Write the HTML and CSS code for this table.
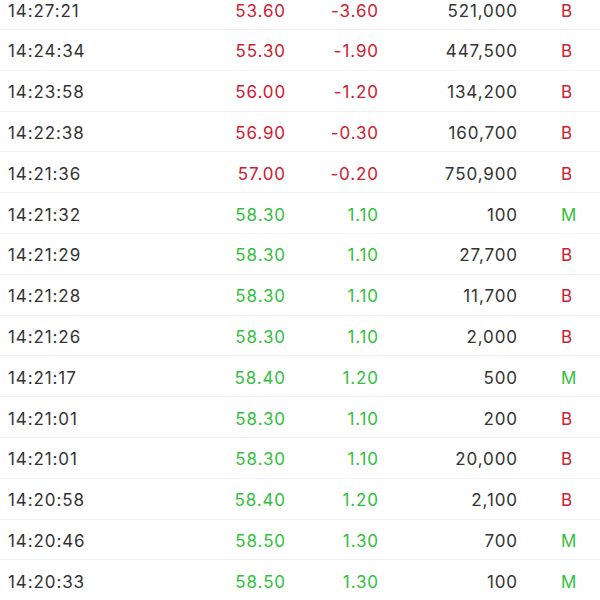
FILE: index.html
```html
<!DOCTYPE html>
<html>
<head>
<meta charset="utf-8">
<link rel="stylesheet" href="styles.css">
</head>
<body>
<div class="list">
  <div class="row"><span class="time">14:27:21</span><span class="num down">53.60</span><span class="num down">-3.60</span><span class="num vol">521,000</span><span class="side b">B</span></div>
  <div class="row"><span class="time">14:24:34</span><span class="num down">55.30</span><span class="num down">-1.90</span><span class="num vol">447,500</span><span class="side b">B</span></div>
  <div class="row"><span class="time">14:23:58</span><span class="num down">56.00</span><span class="num down">-1.20</span><span class="num vol">134,200</span><span class="side b">B</span></div>
  <div class="row"><span class="time">14:22:38</span><span class="num down">56.90</span><span class="num down">-0.30</span><span class="num vol">160,700</span><span class="side b">B</span></div>
  <div class="row"><span class="time">14:21:36</span><span class="num down">57.00</span><span class="num down">-0.20</span><span class="num vol">750,900</span><span class="side b">B</span></div>
  <div class="row"><span class="time">14:21:32</span><span class="num up">58.30</span><span class="num up">1.10</span><span class="num vol">100</span><span class="side m">M</span></div>
  <div class="row"><span class="time">14:21:29</span><span class="num up">58.30</span><span class="num up">1.10</span><span class="num vol">27,700</span><span class="side b">B</span></div>
  <div class="row"><span class="time">14:21:28</span><span class="num up">58.30</span><span class="num up">1.10</span><span class="num vol">11,700</span><span class="side b">B</span></div>
  <div class="row"><span class="time">14:21:26</span><span class="num up">58.30</span><span class="num up">1.10</span><span class="num vol">2,000</span><span class="side b">B</span></div>
  <div class="row"><span class="time">14:21:17</span><span class="num up">58.40</span><span class="num up">1.20</span><span class="num vol">500</span><span class="side m">M</span></div>
  <div class="row"><span class="time">14:21:01</span><span class="num up">58.30</span><span class="num up">1.10</span><span class="num vol">200</span><span class="side b">B</span></div>
  <div class="row"><span class="time">14:21:01</span><span class="num up">58.30</span><span class="num up">1.10</span><span class="num vol">20,000</span><span class="side b">B</span></div>
  <div class="row"><span class="time">14:20:58</span><span class="num up">58.40</span><span class="num up">1.20</span><span class="num vol">2,100</span><span class="side b">B</span></div>
  <div class="row"><span class="time">14:20:46</span><span class="num up">58.50</span><span class="num up">1.30</span><span class="num vol">700</span><span class="side m">M</span></div>
  <div class="row"><span class="time">14:20:33</span><span class="num up">58.50</span><span class="num up">1.30</span><span class="num vol">100</span><span class="side m">M</span></div>
</div>
</body>
</html>
```
FILE: styles.css
```css
html, body {
  margin: 0;
  padding: 0;
  background: #ffffff;
  overflow: hidden;
}
body {
  font-family: Inter, "Liberation Sans", sans-serif;
  font-size: 17px;
  letter-spacing: 0.9px;
  color: #333333;
}
.list {
  margin-top: -10.8px;
}
.row {
  display: grid;
  grid-template-columns: 182px 96px 93px 139px 43px 1fr;
  align-items: center;
  height: 40.8px;
  box-sizing: border-box;
  padding-left: 8px;
  padding-top: 3px;
  border-bottom: 1px solid #f0f0f0;
}
.num {
  text-align: right;
}
.side {
  grid-column: 6;
}
.down, .b {
  color: #cc2030;
}
.up, .m {
  color: #33bf3c;
}
.vol {
  color: #333333;
}
```
